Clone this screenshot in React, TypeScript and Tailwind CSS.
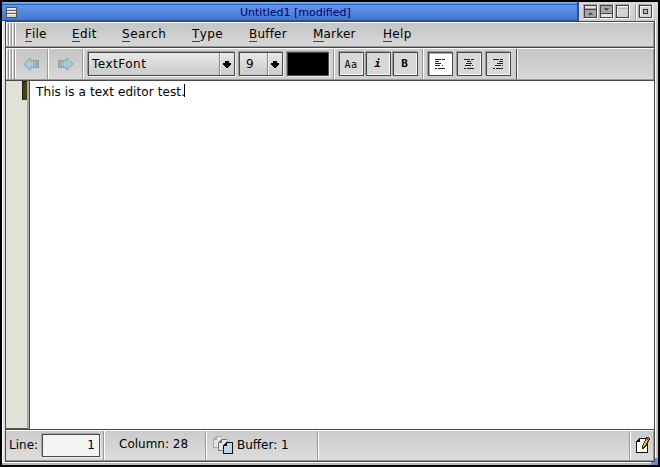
import React from "react";

const menus = [
  { label: "File", width: "w-[47px]", tracking: "tracking-[0.1px]" },
  { label: "Edit", width: "w-[50px]", tracking: "tracking-[0.4px]" },
  { label: "Search", width: "w-[70px]", tracking: "tracking-[0.5px]" },
  { label: "Type", width: "w-[57px]", tracking: "tracking-[0.4px]" },
  { label: "Buffer", width: "w-[64px]", tracking: "tracking-[0.2px]" },
  { label: "Marker", width: "w-[70px]", tracking: "tracking-[0.2px]" },
  { label: "Help", width: "w-[60px]", tracking: "tracking-[0.3px]" },
];

const panel = "bg-linear-to-b from-[#c4c4c4] to-[#d8d8d8]";

function Grip() {
  return (
    <div className="flex h-full w-[10px] shrink-0 bg-[#c8c8c8]">
      {[0, 1, 2].map((n) => (
        <div key={n} className="w-[3px] border-l border-r border-l-white border-r-[#929292] bg-[#cfcfcf]" />
      ))}
      <div className="w-px bg-white" />
    </div>
  );
}

function Arrow({ flip = false }: { flip?: boolean }) {
  return (
    <svg width="16" height="14" viewBox="0 0 16 14" className={flip ? "-scale-x-100" : ""}>
      <path d="M.7 7 6.5 1.2Q7.5.5 7.5 1.5V3.5H15.5V10.5H7.5V12.5Q7.5 13.5 6.5 12.8Z" fill="#a6cbd8" stroke="#959c9e" />
      <path d="M10 4H11V10H10ZM12 4H15V10H12Z" fill="#94b0bb" />
    </svg>
  );
}

function Combo({ text, className, textClass }: { text: string; className: string; textClass: string }) {
  return (
    <div className={`flex h-[24px] shrink-0 border border-[#4a4a4a] bg-linear-to-b from-[#e8e8e8] to-[#cacaca] text-[12px] leading-[22px] shadow-[-1px_-1px_0_#999,1px_1px_0_#eee] ${className}`}>
      <span className={`flex-1 ${textClass}`}>{text}</span>
      <div className="flex w-[15px] items-center justify-center border-l border-[#888] shadow-[inset_1px_0_0_#f4f4f4]">
        <svg width="8" height="7" viewBox="0 0 8 7" shapeRendering="crispEdges">
          <path d="M2 0h4v2h2v2h-1v1h-1v1h-1v1h-2v-1h-1v-1h-1v-1h-1v-2h2z" />
        </svg>
      </div>
    </div>
  );
}

function Tool({ children, active = false }: { children: React.ReactNode; active?: boolean }) {
  return (
    <div className={`flex h-[24px] w-[25px] shrink-0 items-center justify-center border border-[#4a4a4a] ${active ? "bg-white shadow-[-1px_-1px_0_#999,inset_1px_1px_0_#aaa]" : "bg-[#d8d8d8] shadow-[-1px_-1px_0_#999,inset_-1px_-1px_0_#f5f5f5]"}`}>
      {children}
    </div>
  );
}

function Align({ d }: { d: string }) {
  return (
    <svg width="11" height="11" viewBox="0 0 11 11" shapeRendering="crispEdges">
      <path d={d} stroke="#222" fill="none" />
    </svg>
  );
}

function Divider() {
  return <div className="h-full w-[2px] shrink-0 border-l border-[#999] bg-white" />;
}

function WindowButton({ kind }: { kind: "up" | "down" | "blank" | "max" }) {
  const shaded = kind === "up" || kind === "down";
  return (
    <svg width="15" height="15" viewBox="0 0 15 15" shapeRendering="crispEdges" className="shrink-0">
      <path d="M0 0H14V1H1V14H0Z" fill="#aaa" />
      <path d="M14 1H15V15H1V14H14Z" fill="#fff" />
      <rect x="1.5" y="1.5" width="12" height="12" fill={shaded ? "#a9a5a9" : "#d5d2d5"} stroke="#454145" />
      {!shaded && <path d="M2 12V2H13V3H3V12Z" fill="#f4f4f4" />}
      {kind === "up" && (
        <>
          <path d="M2 2H13V4H2Z" fill="#e4e1e4" />
          <path d="M2 5.5H13" stroke="#454145" />
          <path d="M7 8H8V9H9V10H10V11H5V10H6V9H7Z" fill="#555" />
        </>
      )}
      {kind === "down" && (
        <>
          <path d="M2 10H13V13H2Z" fill="#e4e1e4" />
          <path d="M2 9.5H13" stroke="#454145" />
          <path d="M5 4H10V5H9V6H8V7H7V6H6V5H5Z" fill="#555" />
        </>
      )}
      {kind === "blank" && <path d="M3 4.5H13" stroke="#b9b6b9" />}
      {kind === "max" && <rect x="5.5" y="5.5" width="4" height="4" fill="#bbb" stroke="#353135" />}
    </svg>
  );
}

export default function App() {
  return (
    <div className="h-[467px] w-[660px] overflow-hidden bg-black pl-[2px] pt-[2px] font-['DejaVu_Sans',sans-serif] text-black">
      <div className="flex h-[463px] w-[656px] flex-col bg-[#dedede]">
        <div className="flex h-[19px] shrink-0">
          <div className="flex w-[577px] border-b border-r-2 border-[#2b4f94] bg-[linear-gradient(#80b3ef_0_1px,#6497e4_1px_2px,#2e5fb9_2px_3px,#6296e8_3px,#4375d0)] pl-[4px] pt-[5px]">
            <svg width="11" height="11" viewBox="0 0 11 11" shapeRendering="crispEdges" className="shrink-0">
              <rect x=".5" y=".5" width="10" height="10" fill="#d2d2d2" stroke="#555" />
              <path d="M1 3.5H10M1 6.5H10" stroke="#666" />
              <path d="M1 1.5H10M1 4.5H10M1 7.5H10" stroke="#f0f0f0" />
            </svg>
            <div className="ml-[223px] -mt-px h-[13px] whitespace-nowrap text-[11px] leading-[13px] text-[#000074]">Untitled1 [modified]</div>
          </div>
          <div className="flex flex-1 bg-linear-to-b from-[#dadada] to-[#cdcdcd] pl-[4px] pt-[2px]">
            <WindowButton kind="up" />
            <div className="w-px" />
            <WindowButton kind="down" />
            <div className="w-px" />
            <WindowButton kind="blank" />
            <div className="ml-[5px] mr-px"><Divider /></div>
            <WindowButton kind="max" />
          </div>
        </div>
        <div className="flex min-h-0 flex-1 border-l border-white pl-[2px]">
          <div className="flex w-[650px] flex-col border border-[#484848]">
            <div className={`flex h-[25px] shrink-0 border-b border-r border-t border-b-[#999] border-r-[#999] border-t-white ${panel}`}>
              <Grip />
              <div className="flex pl-[9px] pt-[3px] text-[12px] leading-[16px]">
                {menus.map((m) => (
                  <div key={m.label} className={`${m.width} ${m.tracking} whitespace-nowrap`}>
                    <span className="inline-block h-[16px] border-b border-[#444]">{m.label[0]}</span>{m.label.slice(1)}
                  </div>
                ))}
              </div>
            </div>
            <div className={`flex h-[34px] shrink-0 border-b border-t border-b-[#484848] border-t-[#484848] ${panel}`}>
              <div className="flex w-full border-b border-t border-b-[#999] border-t-white">
                <Grip />
                <div className="flex w-[31px] items-center justify-center pr-[2px]"><Arrow /></div>
                <Divider />
                <div className="flex w-[33px] items-center justify-center"><Arrow flip /></div>
                <Divider />
                <div className="flex w-[249px] items-center bg-[#d0cece] pl-[4px]">
                  <Combo text="TextFont" className="w-[147px]" textClass="pl-[3px] tracking-[0.5px]" />
                  <div className="w-[4px]" />
                  <Combo text="9" className="w-[44px]" textClass="pl-[6px]" />
                  <div className="w-[4px]" />
                  <div className="h-[24px] w-[42px] border border-[#4a4a4a] bg-black shadow-[-1px_-1px_0_#999,1px_1px_0_#eee]" />
                </div>
                <Divider />
                <div className="flex w-[87px] items-center gap-[2px] bg-[#d0cece] pl-[4px]">
                  <Tool><span className="pr-px font-['DejaVu_Sans_Mono'] text-[10px] tracking-[0.6px]">Aa</span></Tool>
                  <Tool><span className="pr-[2px] font-['DejaVu_Sans_Mono'] text-[11px] font-bold italic">i</span></Tool>
                  <Tool><span className="pr-[2px] font-['DejaVu_Sans_Mono'] text-[11px] font-bold">B</span></Tool>
                </div>
                <Divider />
                <div className="flex w-[92px] items-center gap-[4px] bg-[#d0cece] pl-[4px]">
                  <Tool active><Align d="M0 .5H6M7 .5H10M0 2.5H4M0 4.5H6M0 6.5H5M7 6.5H8M0 9.5H2M3 9.5H10" /></Tool>
                  <Tool><Align d="M0 .5H6M7 .5H10M3 2.5H7M2 4.5H8M1 6.5H7M8 6.5H9M0 9.5H2M3 9.5H10" /></Tool>
                  <Tool><Align d="M0 .5H6M7 .5H10M6 2.5H10M4 4.5H10M2 6.5H8M9 6.5H10M0 9.5H2M3 9.5H10" /></Tool>
                </div>
                <div className="w-[2px] border-l border-[#484848] bg-white" />
                <div className="flex-1 border-r border-[#999]" />
              </div>
            </div>
            <div className="flex h-[348px] shrink-0 bg-white">
              <div className="flex w-[23px] justify-end border-b border-r-2 border-b-[#555] border-r-[#aaa] bg-[#e0e1d7]">
                <div className="h-[19px] w-[5px] border-l border-t border-[#202000] bg-[#45400f]" />
              </div>
              <div className="w-px bg-[#4a4a4a]" />
              <div className="flex h-[18px] whitespace-nowrap pl-[6px] text-[12px] leading-[22px]">
                <span className="tracking-[0.1px]">This is a text editor test.</span>
                <div className="-ml-px mt-[3px] h-[13px] w-px bg-black" />
              </div>
            </div>
            <div className="flex h-[32px] shrink-0 border-t border-[#484848] bg-linear-to-b from-[#cbcbcb] to-[#dddddd] text-[12px] leading-[16px]">
              <div className="flex w-full border-b border-r border-t border-b-[#999] border-r-[#999] border-t-white">
                <div className="flex w-[97px] pl-[3px]">
                  <span className="w-[33px] pt-[6px]">Line:</span>
                  <div className="mt-[3px] h-[23px] w-[58px] border border-[#4a4a4a] bg-[#f4f4f4] pr-[4px] text-right leading-[21px] shadow-[-1px_-1px_0_#aaa,1px_1px_0_#eee]">1</div>
                </div>
                <Divider />
                <span className="w-[100px] whitespace-nowrap pl-[14px] pt-[5px]">Column: 28</span>
                <Divider />
                <div className="flex w-[110px] pl-[6px] pt-[4px]">
                  <svg width="21" height="20" viewBox="0 0 21 20" shapeRendering="crispEdges">
                    <path d="M3 1H9V3H6V6H5V13H0V4H1V3H2V2H3Z" fill="#aaa" />
                    <path d="M4 2H9V12H1V5H4Z" fill="#e4e4e4" />
                    <path d="M8 4H14V6H15V16H5V7H6V6H7V5H8Z" fill="#777" />
                    <path d="M9 5H14V15H6V8H9Z" fill="#e3e6e6" />
                    <path d="M13 7H20V19H10V10H11V9H12V8H13Z" fill="#111" />
                    <path d="M14 8H19V18H11V11H14Z" fill="#bbd7df" />
                  </svg>
                  <span className="whitespace-nowrap pl-[3px] pt-[2px]">Buffer: 1</span>
                </div>
                <Divider />
                <div className="flex-1" />
                <Divider />
                <div className="flex w-[22px] items-center pl-[5px]">
                  <svg width="14" height="17" viewBox="0 0 14 17" shapeRendering="crispEdges">
                    <path d="M3 1H12V16H0V4H1V3H2V2H3Z" fill="#111" />
                    <path d="M4 2H11V15H1V5H4Z" fill="#fff" />
                    <path d="M6 12V8H7V6H8V4H9V2H10V0H13V1H14V3H13V5H12V7H11V9H10V10H9V11H8V12Z" fill="#3b2b12" />
                    <path d="M7 10V8H8V6H9V4H10V2H11V3H12V4H11V6H10V8H9V9H8V10Z" fill="#efbd3c" />
                    <path d="M11 1H13V3H12V2H11Z" fill="#d65b47" />
                  </svg>
                </div>
              </div>
            </div>
          </div>
          <div className="flex w-[3px] flex-col justify-end bg-[linear-gradient(90deg,#fff_0_1px,#c8c8c8_1px)]"><div className="h-[4px] bg-[#5b8edf]" /></div>
        </div>
        <div className="flex h-[3px] shrink-0 justify-end bg-[linear-gradient(#fff_0_1px,#b5b5b5_1px)]"><div className="w-[7px] bg-[#5b8edf]" /></div>
      </div>
    </div>
  );
}
